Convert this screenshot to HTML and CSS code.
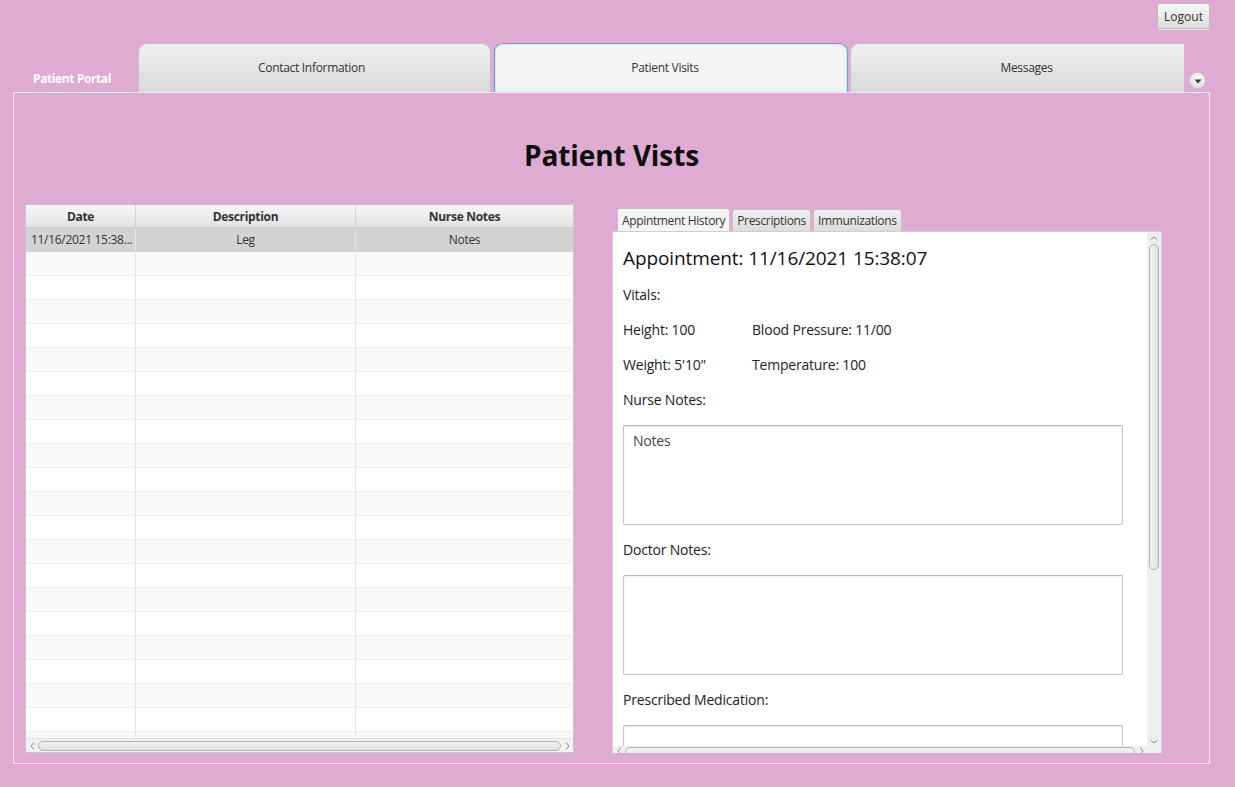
FILE: index.html
```html
<!DOCTYPE html>
<html>
<head>
<meta charset="utf-8">
<title>Patient Portal</title>
<link rel="stylesheet" href="styles.css">
</head>
<body>
<div class="app">
  <div class="topbar">
    <button class="logout">Logout</button>
  </div>
  <div class="tabbar">
    <div class="brand">Patient Portal</div>
    <div class="tab tab-contact">Contact Information</div>
    <div class="tab tab-visits active">Patient Visits</div>
    <div class="tab tab-messages">Messages</div>
    <div class="tab-menu"><svg width="8" height="5" viewBox="0 0 8 5"><path d="M0.5 0.5 L7.5 0.5 L4 4.5 Z" fill="#3a3a3a"/></svg></div>
  </div>
  <div class="panel">
    <h1 class="title">Patient Vists</h1>
    <div class="content">
      <div class="table">
        <div class="thead">
          <div class="th c-date">Date</div>
          <div class="th c-desc">Description</div>
          <div class="th c-notes">Nurse Notes</div>
        </div>
        <div class="tbody">
          <div class="tr selected"><div class="td c-date left">11/16/2021 15:38...</div><div class="td c-desc">Leg</div><div class="td c-notes">Notes</div></div>
          <div class="tr odd"><div class="td c-date"></div><div class="td c-desc"></div><div class="td c-notes"></div></div>
          <div class="tr"><div class="td c-date"></div><div class="td c-desc"></div><div class="td c-notes"></div></div>
          <div class="tr odd"><div class="td c-date"></div><div class="td c-desc"></div><div class="td c-notes"></div></div>
          <div class="tr"><div class="td c-date"></div><div class="td c-desc"></div><div class="td c-notes"></div></div>
          <div class="tr odd"><div class="td c-date"></div><div class="td c-desc"></div><div class="td c-notes"></div></div>
          <div class="tr"><div class="td c-date"></div><div class="td c-desc"></div><div class="td c-notes"></div></div>
          <div class="tr odd"><div class="td c-date"></div><div class="td c-desc"></div><div class="td c-notes"></div></div>
          <div class="tr"><div class="td c-date"></div><div class="td c-desc"></div><div class="td c-notes"></div></div>
          <div class="tr odd"><div class="td c-date"></div><div class="td c-desc"></div><div class="td c-notes"></div></div>
          <div class="tr"><div class="td c-date"></div><div class="td c-desc"></div><div class="td c-notes"></div></div>
          <div class="tr odd"><div class="td c-date"></div><div class="td c-desc"></div><div class="td c-notes"></div></div>
          <div class="tr"><div class="td c-date"></div><div class="td c-desc"></div><div class="td c-notes"></div></div>
          <div class="tr odd"><div class="td c-date"></div><div class="td c-desc"></div><div class="td c-notes"></div></div>
          <div class="tr"><div class="td c-date"></div><div class="td c-desc"></div><div class="td c-notes"></div></div>
          <div class="tr odd"><div class="td c-date"></div><div class="td c-desc"></div><div class="td c-notes"></div></div>
          <div class="tr"><div class="td c-date"></div><div class="td c-desc"></div><div class="td c-notes"></div></div>
          <div class="tr odd"><div class="td c-date"></div><div class="td c-desc"></div><div class="td c-notes"></div></div>
          <div class="tr"><div class="td c-date"></div><div class="td c-desc"></div><div class="td c-notes"></div></div>
          <div class="tr odd"><div class="td c-date"></div><div class="td c-desc"></div><div class="td c-notes"></div></div>
          <div class="tr"><div class="td c-date"></div><div class="td c-desc"></div><div class="td c-notes"></div></div>
          <div class="tr odd"><div class="td c-date"></div><div class="td c-desc"></div><div class="td c-notes"></div></div>
        </div>
        <div class="hscroll">
          <span class="arrow"><svg width="5" height="8" viewBox="0 0 5 8"><path d="M4 0.5 L1 4 L4 7.5" fill="none" stroke="#8a8a8a" stroke-width="1"/></svg></span>
          <span class="thumb"></span>
          <span class="arrow"><svg width="5" height="8" viewBox="0 0 5 8"><path d="M1 0.5 L4 4 L1 7.5" fill="none" stroke="#8a8a8a" stroke-width="1"/></svg></span>
        </div>
      </div>

      <div class="subpane">
        <div class="subtabs">
          <div class="subtab active">Appintment History</div>
          <div class="subtab">Prescriptions</div>
          <div class="subtab">Immunizations</div>
        </div>
        <div class="subbody">
          <div class="viewport">
            <div class="details">
              <div class="heading">Appointment: 11/16/2021 15:38:07</div>
              <div class="label">Vitals:</div>
              <div class="vitals">
                <span>Height: 100</span><span>Blood Pressure: 11/00</span>
              </div>
              <div class="vitals">
                <span>Weight: 5'10"</span><span>Temperature: 100</span>
              </div>
              <div class="label">Nurse Notes:</div>
              <div class="textarea">Notes</div>
              <div class="label">Doctor Notes:</div>
              <div class="textarea"></div>
              <div class="label">Prescribed Medication:</div>
              <div class="textarea"></div>
            </div>
            <div class="vscroll">
              <span class="varrow"><svg width="8" height="5" viewBox="0 0 8 5"><path d="M0.5 4 L4 1 L7.5 4" fill="none" stroke="#8a8a8a" stroke-width="1"/></svg></span>
              <span class="vthumb"></span>
              <span class="varrow"><svg width="8" height="5" viewBox="0 0 8 5"><path d="M0.5 1 L4 4 L7.5 1" fill="none" stroke="#8a8a8a" stroke-width="1"/></svg></span>
            </div>
          </div>
          <div class="bottombar">
            <div class="hscroll2">
              <span class="arrow2"><svg width="5" height="8" viewBox="0 0 5 8"><path d="M4 0.5 L1 4 L4 7.5" fill="none" stroke="#8a8a8a" stroke-width="1"/></svg></span>
              <span class="thumb2"></span>
              <span class="arrow2"><svg width="5" height="8" viewBox="0 0 5 8"><path d="M1 0.5 L4 4 L1 7.5" fill="none" stroke="#8a8a8a" stroke-width="1"/></svg></span>
            </div>
            <div class="corner"></div>
          </div>
        </div>
      </div>
    </div>
  </div>
</div>
</body>
</html>
```

FILE: styles.css
```css
* { box-sizing: border-box; }

html, body {
  margin: 0;
  padding: 0;
}

body {
  background: #dfabd2;
  width: 1235px;
  height: 787px;
  overflow: hidden;
  font-family: "Open Sans", "Noto Sans", "Liberation Sans", sans-serif;
  color: #333;
}

.app {
  display: flex;
  flex-direction: column;
}

/* top bar */
.topbar {
  height: 43px;
  display: flex;
  justify-content: flex-end;
  align-items: flex-start;
  padding-right: 25px;
  padding-top: 3px;
}

.logout {
  height: 26px;
  width: 53px;
  padding: 0;
  font-family: inherit;
  font-size: 12px;
  color: #333;
  border: 1px solid #c4b9c1;
  border-radius: 3px;
  background: linear-gradient(#f8f8f8, #dcdcdc);
  box-shadow: 0 1px 0 #f2e4ee;
}

/* main tabs */
.tabbar {
  height: 49px;
  display: flex;
  align-items: stretch;
}

.brand {
  width: 138px;
  padding-left: 33px;
  align-self: flex-end;
  padding-bottom: 5px;
  color: #fff;
  font-weight: bold;
  font-size: 12px;
  letter-spacing: -0.4px;
}

.tab {
  display: flex;
  align-items: center;
  justify-content: center;
  font-size: 12px;
  color: #333;
  border: 1px solid #c9bcc6;
  border-bottom: none;
  border-radius: 9px 9px 0 0;
  background: linear-gradient(#efefef, #dadada);
  padding-bottom: 1px;
  letter-spacing: -0.3px;
}

.tab-contact { width: 353px; margin-right: 3px; padding-right: 6px; }
.tab-visits { width: 354px; margin-right: 2px; padding-right: 12px; }
.tab-messages { width: 334px; border-radius: 9px 0 0 0; border-right: none; padding-left: 18px; }

.tab.active {
  background: #f4f4f4;
  border: 1px solid #5aa6dc;
  border-bottom: none;
  box-shadow: inset 0 0 0 1px #d6e9f7;
}

.tab-menu {
  width: 17px;
  height: 17px;
  margin-left: 5px;
  align-self: flex-end;
  margin-bottom: 3px;
  border-radius: 50%;
  background: radial-gradient(circle at 50% 35%, #fbfbfb, #d9d9d9);
  border: 1px solid #d0c4cd;
  display: flex;
  align-items: center;
  justify-content: center;
  padding-top: 1px;
}

/* panel */
.panel {
  margin-left: 13px;
  width: 1197px;
  height: 672px;
  border: 1px solid #f3e8f0;
  padding: 0 11px;
}

.title {
  margin: 42px 0 0 0;
  height: 40px;
  line-height: 40px;
  text-align: center;
  font-size: 28px;
  font-weight: bold;
  color: #0d0d0d;
  letter-spacing: -0.1px;
}

.content {
  margin-top: 29px;
  display: flex;
  align-items: flex-start;
  gap: 38px;
}

/* table */
.table {
  width: 549px;
  height: 549px;
  border: 1px solid #c7c7c7;
  background: #fff;
  display: flex;
  flex-direction: column;
  overflow: hidden;
}

.thead {
  display: flex;
  height: 23px;
  background: linear-gradient(#f6f6f6, #e3e3e3);
  border-bottom: 1px solid #c9c9c9;
}

.th {
  display: flex;
  align-items: center;
  justify-content: center;
  font-size: 12px;
  font-weight: bold;
  color: #333;
  border-right: 1px solid #d2d2d2;
  letter-spacing: -0.3px;
}

.c-date { width: 110px; }
.c-desc { width: 220px; }
.c-notes { flex: 1; border-right: none !important; }

.tbody {
  height: 510px;
  overflow: hidden;
}

.tr {
  display: flex;
  height: 24px;
  background: #fff;
  border-bottom: 1px solid #eeeeee;
}

.tr.odd { background: #f9f9f9; }
.tr.selected { background: #d3d3d3; border-bottom-color: #d3d3d3; }

.td {
  display: flex;
  align-items: center;
  justify-content: center;
  font-size: 12px;
  color: #333;
  border-right: 1px solid #e4e4e4;
  white-space: nowrap;
  overflow: hidden;
  letter-spacing: -0.3px;
}

.td.left {
  justify-content: flex-start;
  padding-left: 5px;
}

.hscroll {
  flex: 1;
  display: flex;
  align-items: center;
  gap: 3px;
  padding: 0 3px;
  background: #f2f2f2;
  border-top: 1px solid #e2e2e2;
}

.arrow {
  width: 6px;
  display: flex;
  justify-content: center;
}

.thumb {
  flex: 1;
  height: 10px;
  border: 1px solid #b3b3b3;
  border-radius: 5px;
  background: linear-gradient(#f2f2f2, #dedede);
}

/* sub tab pane */
.subpane {
  margin-top: 4px;
  width: 550px;
  height: 545px;
  display: flex;
  flex-direction: column;
}

.subtabs {
  height: 23px;
  display: flex;
  align-items: flex-end;
  padding-left: 5px;
  gap: 2px;
}

.subtab {
  height: 22px;
  padding: 0 4px;
  display: flex;
  align-items: center;
  font-size: 12px;
  color: #333;
  border: 1px solid #c9bcc6;
  border-bottom: none;
  border-radius: 3px 3px 0 0;
  background: linear-gradient(#f0f0f0, #dcdcdc);
  letter-spacing: -0.35px;
}

.subtab.active {
  background: #f4f4f4;
  height: 23px;
}

.subbody {
  flex: 1;
  background: #fff;
  border: 1px solid #cfcfcf;
  border-bottom: none;
  display: flex;
  flex-direction: column;
  overflow: hidden;
}

.viewport {
  flex: 1;
  display: flex;
  overflow: hidden;
}

.details {
  flex: 1;
  padding: 13px 0 0 10px;
  display: flex;
  flex-direction: column;
  gap: 15px;
  overflow: hidden;
  color: #222;
}

.heading {
  height: 25px;
  line-height: 26px;
  font-size: 19px;
  letter-spacing: -0.1px;
  color: #111;
}

.label, .vitals {
  height: 20px;
  line-height: 20px;
  font-size: 14px;
  letter-spacing: -0.2px;
  flex-shrink: 0;
}

.vitals {
  display: flex;
}

.vitals span:first-child {
  width: 129px;
}

.textarea {
  flex-shrink: 0;
  width: 500px;
  height: 100px;
  border: 1px solid #c6c6c6;
  border-top-color: #b5b5b5;
  border-radius: 2px;
  box-shadow: inset 0 1px 2px rgba(0,0,0,0.08);
  padding: 5px 9px;
  font-size: 14px;
  color: #444;
  letter-spacing: -0.2px;
}

.vscroll {
  width: 14px;
  background: #efefef;
  display: flex;
  flex-direction: column;
  align-items: center;
  padding: 3px 0 2px;
  gap: 3px;
}

.varrow {
  height: 6px;
  display: flex;
  align-items: center;
}

.vthumb {
  width: 10px;
  height: 326px;
  border: 1px solid #b3b3b3;
  border-radius: 5px;
  background: linear-gradient(90deg, #f2f2f2, #dedede);
}

.vscroll .varrow:last-child {
  margin-top: auto;
}

.bottombar {
  height: 7px;
  display: flex;
}

.hscroll2 {
  flex: 1;
  background: #efefef;
  display: flex;
  align-items: flex-start;
  gap: 3px;
  padding: 1px 3px 0;
  overflow: hidden;
}

.arrow2 {
  width: 6px;
  height: 8px;
  display: flex;
  justify-content: center;
}

.thumb2 {
  flex: 1;
  height: 12px;
  border: 1px solid #b3b3b3;
  border-radius: 5px;
  background: linear-gradient(#f2f2f2, #dedede);
}

.corner {
  width: 14px;
  background: #efefef;
}
```
